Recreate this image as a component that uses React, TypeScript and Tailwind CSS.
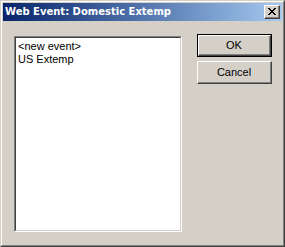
import React from 'react';

const font = { fontFamily: 'Tahoma, "Liberation Sans", Arial, sans-serif' };

const Win95Button: React.FC<{ label: string; isDefault?: boolean }> = ({ label, isDefault }) => (
  <div className={`w-[75px] h-[23px] ${isDefault ? 'border border-black' : ''}`}>
    <div className="h-full border-t border-l border-white border-r border-b border-r-[#404040] border-b-[#404040]">
      <div className="h-full flex items-center justify-center border-r border-b border-[#808080] text-[11px] text-black">
        {label}
      </div>
    </div>
  </div>
);

export default function App() {
  const items = ['<new event>', 'US Extemp'];

  return (
    <div className="w-[285px] h-[247px] bg-[#d4d0c8] border border-[#d4d0c8] border-r-[#404040] border-b-[#404040] select-none" style={font}>
      <div className="h-full border border-white border-r-[#808080] border-b-[#808080] p-px flex flex-col">
        <div className="h-[18px] flex items-center justify-between bg-gradient-to-r from-[#0a246a] to-[#a6caf0] pl-[2px] pr-[2px]">
          <span className="text-white font-bold text-[10px] leading-none font-['DejaVu_Sans',sans-serif]">Web Event: Domestic Extemp</span>
          <div className="w-[16px] h-[14px] bg-[#d4d0c8] border-t border-l border-white border-r border-b border-r-[#404040] border-b-[#404040]">
            <div className="w-full h-full border-r border-b border-[#808080] flex items-center justify-center">
              <svg width="8" height="7" viewBox="0 0 8 7" shapeRendering="crispEdges">
                <path d="M0 0h2v1h-2zM6 0h2v1h-2zM1 1h2v1h-2zM5 1h2v1h-2zM2 2h4v1h-4zM3 3h2v1h-2zM2 4h4v1h-4zM1 5h2v1h-2zM5 5h2v1h-2zM0 6h2v1h-2zM6 6h2v1h-2z" fill="#000" />
              </svg>
            </div>
          </div>
        </div>
        <div className="flex items-start pl-[11px] pt-[15px]">
          <div className="w-[168px] h-[196px] border border-[#808080] border-r-white border-b-white">
            <div className="w-full h-full bg-white border border-[#404040] border-r-[#d4d0c8] border-b-[#d4d0c8] pl-[2px] pt-[2px]">
              {items.map(item => (
                <div key={item} className="text-[11px] leading-[13px] text-black">{item}</div>
              ))}
            </div>
          </div>
          <div className="flex flex-col gap-[4px] ml-[15px] -mt-[2px]">
            <Win95Button label="OK" isDefault />
            <Win95Button label="Cancel" />
          </div>
        </div>
      </div>
    </div>
  );
}
